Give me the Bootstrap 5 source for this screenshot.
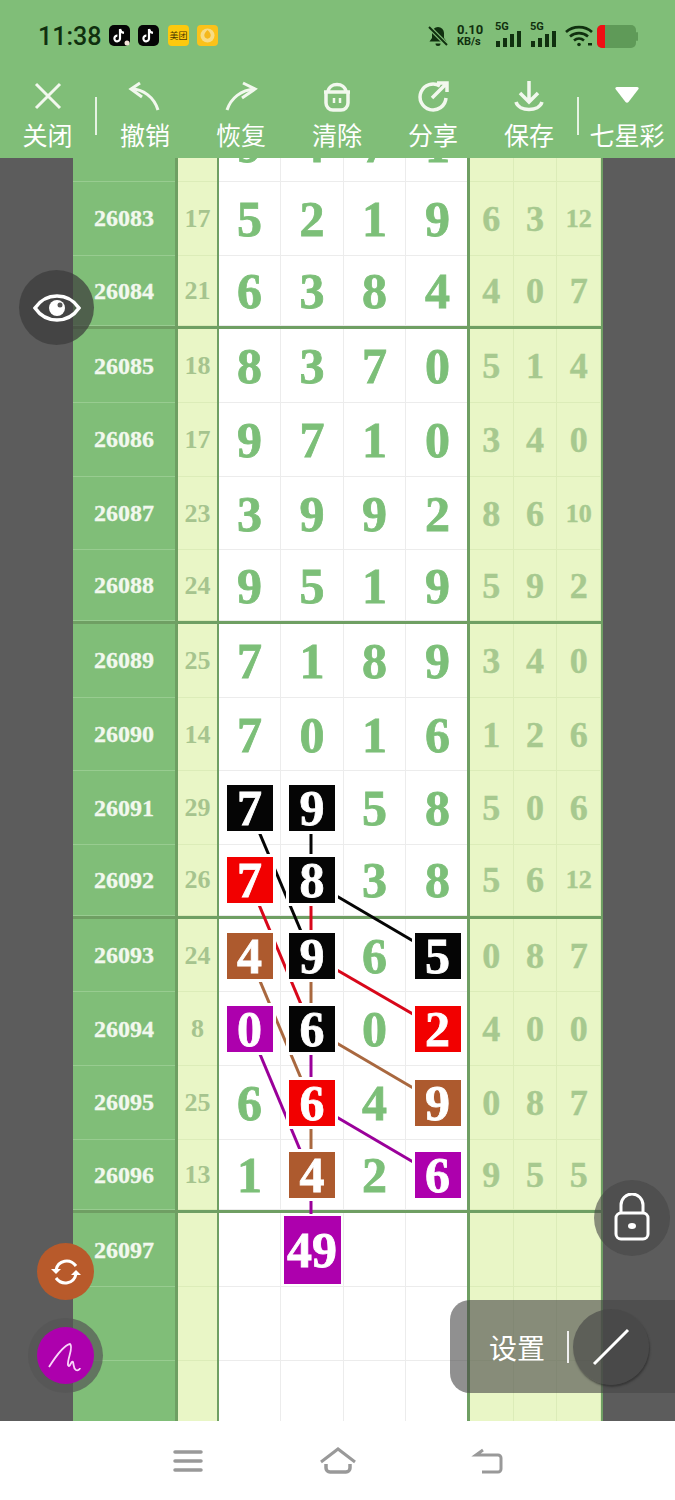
<!DOCTYPE html>
<html lang="zh">
<head>
<meta charset="UTF-8">
<meta name="viewport" content="width=device-width, initial-scale=1.0">
<title>七星彩</title>
<link href="https://cdn.jsdelivr.net/npm/bootstrap@5.3.0/dist/css/bootstrap.min.css" rel="stylesheet">
<style>
  body { margin: 0; background: #fff; font-family: "Noto Sans CJK SC", "Noto Sans", sans-serif; }
  .screen { width: 675px; height: 1500px; overflow: hidden; }
  .top-area { height: 158px; background: #80be78; color: #fff; }
  .status-line { height: 70px; padding: 2px 37px 0 38px; color: #10300f; }
  .clock { font: 500 25px Roboto, sans-serif; width: 71px; }
  .speed { font: 700 13px/12px Roboto, sans-serif; width: 30px; margin: 0 8px; }
  .speed span { font-size: 11px; display: block; }
  .sig-label { font: 700 11px/11px Roboto, sans-serif; position: absolute; left: 0; top: -4px; }
  .sig { width: 27px; height: 22px; }
  .tool-line { height: 88px; }
  .tool { width: 96px; height: 88px; padding-top: 8px; font-size: 25px; line-height: 28px; }
  .tool svg { display: block; height: 36px; margin-bottom: 6px; }
  .tool-sep { width: 2px; height: 38px; background: #e6f3e3; margin-top: 27px; }
  .board { height: 1263px; background: #5c5c5c; overflow: hidden; }
  .sheet { width: 530px; margin-left: 73px; }
  .line-row { height: 73.67px; }
  .line-row.first-row { margin-top: -49.5px; }
  .line-row.group-end { border-bottom: 3px solid #6f9f63; }
  .period { width: 105px; background: #80be78; color: #f2f8ee; border-right: 3px solid #6f9f63; font: 700 24px "Liberation Serif", serif; box-shadow: inset 0 -1px 0 #98cc90; -webkit-text-stroke: .3px currentColor; }
  .sum { width: 41px; background: #e9f6c6; color: #a6c48e; border-right: 2px solid #6f9f63; font: 700 26px "Liberation Serif", serif; box-shadow: inset 0 -1px 0 #dcecb8; }
  .ball { width: 62px; background: #fff; border-right: 1px solid #ececec; color: #7cbf78; font: 700 50px "Liberation Serif", serif; box-shadow: inset 0 -1px 0 #ececec; -webkit-text-stroke: .8px currentColor; }
  .ball:nth-of-type(4) { width: 63px; }
  .ball:nth-of-type(6) { width: 61px; border-right: 0; padding-left: 2px; }
  .tail-group { width: 134px; border-left: 3px solid #6f9f63; }
  .tail { width: 43.67px; background: #e9f6c6; border-right: 1px solid #dcecb8; color: #a7c98f; font: 700 36px "Liberation Serif", serif; box-shadow: inset 0 -1px 0 #dcecb8; -webkit-text-stroke: .4px currentColor; }
  .tail.two-digit { font-size: 26px; }
  .tail-end { width: 2px; background: #6f9f63; }
  .hit { width: 46px; height: 46px; color: #fff; outline: 3px solid #fff; position: relative; z-index: 3; line-height: 46px; }
  .hit-k { background: #050505; }
  .hit-r { background: #f20000; }
  .hit-b { background: #ad5a2e; }
  .hit-p { background: #ad00ad; }
  .hit-big { width: 57px; height: 68px; line-height: 68px; outline-width: 2px; }
  .link-lines { left: 73px; top: 158px; z-index: 2; }
  .float-btn { border-radius: 50%; z-index: 5; }
  .eye-btn { left: 19px; top: 270px; width: 75px; height: 75px; background: rgba(60,60,60,.72); }
  .swap-btn { left: 37px; top: 1243px; width: 57px; height: 57px; background: #b85a2b; }
  .pen-ring { left: 28px; top: 1318px; width: 75px; height: 75px; background: rgba(85,85,85,.7); }
  .pen-btn { width: 57px; height: 57px; background: #ad00ad; border-radius: 50%; }
  .lock-btn { left: 594px; top: 1180px; width: 76px; height: 76px; background: rgba(70,70,70,.6); }
  .setting-bar { left: 450px; top: 1300px; width: 225px; height: 93px; background: rgba(70,70,70,.6); border-radius: 20px 0 0 20px; color: #fff; font-size: 28px; padding-left: 39px; z-index: 4; }
  .setting-sep { width: 2px; height: 32px; background: #f0f0f0; margin-left: 22px; }
  .pen-line { width: 76px; height: 76px; border-radius: 50%; background: rgba(70,70,70,.65); box-shadow: 1px 2px 2px rgba(40,40,40,.6); margin-left: 4px; }
  .bottom-nav { height: 79px; background: #fff; }
</style>
</head>
<body>
<div class="screen position-relative d-flex flex-column">

  <div class="top-area">
    <div class="status-line d-flex align-items-center justify-content-between">
      <div class="d-flex align-items-center">
        <div class="clock">11:38</div>
        <svg width="110" height="22" viewBox="0 0 110 22">
          <rect x="0" y="0" width="21" height="21" rx="5" fill="#050505"/>
          <path d="M11 4v9.500a2.800 2.800 0 1 1-2.600-2.800M11 4c.3 2.300 1.700 3.600 4 3.900" fill="none" stroke="#fff" stroke-width="2.200"/>
          <circle cx="18" cy="18" r="2.500" fill="#f4e4d8"/>
          <rect x="29" y="0" width="21" height="21" rx="5" fill="#050505"/>
          <path d="M40 4v9.500a2.800 2.800 0 1 1-2.600-2.800M40 4c.3 2.300 1.700 3.600 4 3.900" fill="none" stroke="#fff" stroke-width="2.200"/>
          <rect x="59" y="0" width="21" height="21" rx="4" fill="#fdc90e"/>
          <text x="69.500" y="14" font-size="9" text-anchor="middle" fill="#4a3800">美团</text>
          <rect x="88" y="0" width="21" height="21" rx="4" fill="#fbc21a"/>
          <circle cx="98.500" cy="10.500" r="7" fill="#f7dc86"/>
          <path d="M98.500 5c3 3 4 5 2.500 7.500-1.500 1.500-3.500 1.500-5 0-1.500-2.500-.5-4.500 2.500-7.500z" fill="#f5b81c"/>
        </svg>
      </div>
      <div class="d-flex align-items-center">
        <svg width="22" height="22" viewBox="0 0 22 22">
          <path d="M11 2a6 6 0 0 0-6 6v5l-2.500 3.500h17L17 13V8a6 6 0 0 0-6-6z" fill="#10300f"/>
          <path d="M8.500 18.500h5a2.500 2.500 0 0 1-5 0z" fill="#10300f"/>
          <path d="M2 2l18 18" stroke="#80be78" stroke-width="4.500"/>
          <path d="M2 2l18 18" stroke="#10300f" stroke-width="2"/>
        </svg>
        <div class="speed">0.10<span>KB/s</span></div>
        <div class="sig position-relative me-1">
          <span class="sig-label">5G</span>
          <svg class="position-absolute bottom-0 start-0" width="27" height="16" viewBox="0 0 27 16" fill="#10300f"><rect x="1" y="10" width="4" height="6"/><rect x="8" y="7" width="4" height="9"/><rect x="15" y="3" width="4" height="13"/><rect x="22" y="0" width="4" height="16"/></svg>
        </div>
        <div class="sig position-relative ms-1">
          <span class="sig-label">5G</span>
          <svg class="position-absolute bottom-0 start-0" width="27" height="16" viewBox="0 0 27 16" fill="#10300f"><rect x="1" y="10" width="4" height="6"/><rect x="8" y="7" width="4" height="9"/><rect x="15" y="3" width="4" height="13"/><rect x="22" y="0" width="4" height="16"/></svg>
        </div>
        <svg class="ms-2" width="28" height="22" viewBox="0 0 28 22" fill="none" stroke="#10300f" stroke-width="2.600">
          <path d="M1 7c7-6.500 19-6.500 26 0"/><path d="M5 11.500c5-4.500 13-4.500 18 0"/><path d="M9 15.500c3-2.500 7-2.500 10 0"/>
          <circle cx="14" cy="19.500" r="1.800" fill="#10300f" stroke="none"/><rect x="23" y="18" width="4" height="2.500" fill="#10300f" stroke="none"/>
        </svg>
        <svg class="ms-1" width="41" height="23" viewBox="0 0 41 23">
          <rect x="0" y="0" width="39" height="23" rx="5" fill="#5f9a58"/>
          <path d="M5 0h3v23H5a5 5 0 0 1-5-5V5a5 5 0 0 1 5-5z" fill="#f00f14"/>
          <rect x="39" y="7" width="2" height="9" rx="1" fill="#5f9a58"/>
        </svg>
      </div>
    </div>
    <div class="tool-line d-flex">
      <div class="tool text-center" style="width:95px">
        <svg class="mx-auto" width="36" viewBox="0 0 36 36" fill="none" stroke="#f2f8ee" stroke-width="3"><path d="M6 6l24 24M30 6L6 30"/></svg>关闭
      </div>
      <div class="tool-sep"></div>
      <div class="tool text-center">
        <svg class="mx-auto" width="36" viewBox="0 0 36 36" fill="none" stroke="#f2f8ee" stroke-width="3"><path d="M13 5L4 11l11 8"/><path d="M4 11c12 0 23 8 27 21"/></svg>撤销
      </div>
      <div class="tool text-center">
        <svg class="mx-auto" width="36" viewBox="0 0 36 36" fill="none" stroke="#f2f8ee" stroke-width="3"><path d="M20 5l12 6-13 9"/><path d="M32 11C18 12 8 20 4 32"/></svg>恢复
      </div>
      <div class="tool text-center">
        <svg class="mx-auto" width="36" viewBox="0 0 36 36" fill="none" stroke="#f2f8ee" stroke-width="3.500"><path d="M7 14v11a7 7 0 0 0 7 7h8a7 7 0 0 0 7-7V14"/><path d="M5 14h26"/><path d="M9 14c1-10 17-10 18 0"/><path d="M15 20v5M21 20v5" stroke-width="2.500"/></svg>清除
      </div>
      <div class="tool text-center">
        <svg class="mx-auto" width="36" viewBox="0 0 36 36" fill="none" stroke="#f2f8ee" stroke-width="3.500"><path d="M25 8A13 13 0 1 0 31 20"/><path d="M17 20L31 6M22 5h10v9"/></svg>分享
      </div>
      <div class="tool text-center">
        <svg class="mx-auto" width="36" viewBox="0 0 36 36" fill="none" stroke="#f2f8ee" stroke-width="3.500"><path d="M18 3v21M9 15l9 9 9-9"/><path d="M5 24c3 10 23 10 26 0"/></svg>保存
      </div>
      <div class="tool-sep"></div>
      <div class="tool text-center" style="width:96px">
        <svg class="mx-auto" width="36" viewBox="0 0 36 36"><path d="M8 9h20c1.500 0 2 1 1.500 2L19.500 24c-.8 1-2.200 1-3 0L6.500 11C6 10 6.500 9 8 9z" fill="#fff"/></svg>七星彩
      </div>
    </div>
  </div>

  <div class="board">
    <div class="sheet" id="sheet"></div>
  </div>

  <div class="bottom-nav d-flex align-items-center">
    <svg style="margin-left:172px" width="32" height="26" viewBox="0 0 32 26" stroke="#999" stroke-width="3.500" stroke-linecap="round"><path d="M3 4h26M3 13h26M3 22h26"/></svg>
    <svg style="margin-left:116px" width="36" height="28" viewBox="0 0 36 28" fill="none" stroke="#999" stroke-width="3"><path d="M1 15L18 2l17 13"/><path d="M6 17v4a4 4 0 0 0 4 4h16a4 4 0 0 0 4-4v-4" stroke-width="3.500"/></svg>
    <svg style="margin-left:115px" width="36" height="28" viewBox="0 0 36 28" fill="none" stroke="#999" stroke-width="3"><path d="M12 3L5 8h22a3 3 0 0 1 3 3v11a3 3 0 0 1-3 3H11"/></svg>
  </div>

  <svg class="link-lines position-absolute" id="links" width="530" height="1263" viewBox="73 158 530 1263"></svg>

  <div class="float-btn eye-btn position-absolute d-flex align-items-center justify-content-center">
    <svg width="48" height="34" viewBox="0 0 48 34"><path d="M2 17C13 1 35 1 46 17 35 33 13 33 2 17z" fill="none" stroke="#fff" stroke-width="3.500"/><circle cx="24" cy="17" r="8" fill="#fff"/><circle cx="27" cy="14" r="2.500" fill="#555"/></svg>
  </div>
  <div class="float-btn lock-btn position-absolute d-flex align-items-center justify-content-center">
    <svg width="38" height="50" viewBox="0 0 38 50" fill="none" stroke="#fff" stroke-width="3"><path d="M8 20v-8a11 11 0 0 1 22 0v8"/><rect x="3" y="20" width="32" height="26" rx="5"/><ellipse cx="19" cy="33" rx="4" ry="3" fill="#fff" stroke="none"/></svg>
  </div>
  <div class="float-btn swap-btn position-absolute d-flex align-items-center justify-content-center">
    <svg width="32" height="28" viewBox="0 0 32 28" fill="none" stroke="#fff" stroke-width="3"><path d="M6 12C8 2 20 0 26 8"/><path d="M26 16C24 26 12 28 6 20"/><path d="M1 11l5 5 5-5z" fill="#fff" stroke="none"/><path d="M21 17l5-5 5 5z" fill="#fff" stroke="none"/></svg>
  </div>
  <div class="float-btn pen-ring position-absolute d-flex align-items-center justify-content-center">
    <div class="pen-btn d-flex align-items-center justify-content-center">
      <svg width="40" height="40" viewBox="0 0 40 40" fill="none" stroke="#f9d5f9" stroke-width="1.800"><path d="M3 31C10 20 18 9 24 8c4 3-3 15-2 21 2 4 3-5 5-3 1 3 0 6 3 8 2 1 4-1 4-2"/></svg>
    </div>
  </div>
  <div class="setting-bar position-absolute d-flex align-items-center">
    设置
    <div class="setting-sep"></div>
    <div class="pen-line d-flex align-items-center justify-content-center">
      <svg width="38" height="38" viewBox="0 0 38 38" stroke="#fff" stroke-width="3"><path d="M2 36L36 2"/></svg>
    </div>
  </div>
</div>

<script src="https://cdn.jsdelivr.net/npm/bootstrap@5.3.0/dist/js/bootstrap.bundle.min.js"></script>
<script>
  // period, sum, four balls (k/r/b/p suffix = highlighted colour), three tails
  const rows = [
    ['', '', '9', '4', '7', '1', '', '', ''],
    ['26083', '17', '5', '2', '1', '9', '6', '3', '12'],
    ['26084', '21', '6', '3', '8', '4', '4', '0', '7'],
    ['26085', '18', '8', '3', '7', '0', '5', '1', '4'],
    ['26086', '17', '9', '7', '1', '0', '3', '4', '0'],
    ['26087', '23', '3', '9', '9', '2', '8', '6', '10'],
    ['26088', '24', '9', '5', '1', '9', '5', '9', '2'],
    ['26089', '25', '7', '1', '8', '9', '3', '4', '0'],
    ['26090', '14', '7', '0', '1', '6', '1', '2', '6'],
    ['26091', '29', '7k', '9k', '5', '8', '5', '0', '6'],
    ['26092', '26', '7r', '8k', '3', '8', '5', '6', '12'],
    ['26093', '24', '4b', '9k', '6', '5k', '0', '8', '7'],
    ['26094', '8', '0p', '6k', '0', '2r', '4', '0', '0'],
    ['26095', '25', '6', '6r', '4', '9b', '0', '8', '7'],
    ['26096', '13', '1', '4b', '2', '6p', '9', '5', '5'],
    ['26097', '', '', '49P', '', '', '', '', ''],
    ['', '', '', '', '', '', '', '', ''],
    ['', '', '', '', '', '', '', '', '']
  ];
  const center = 'd-flex align-items-center justify-content-center';

  function ballHtml(v) {
    if (!v) return `<div class="ball ${center}"></div>`;
    const m = v.match(/^(\d+)([krbpP]?)$/);
    if (!m[2]) return `<div class="ball ${center}">${m[1]}</div>`;
    const big = m[2] === 'P';
    const cls = 'hit hit-' + m[2].toLowerCase() + (big ? ' hit-big' : '');
    return `<div class="ball ${center}"><div class="${cls} text-center">${m[1]}</div></div>`;
  }

  document.getElementById('sheet').innerHTML = rows.map((r, i) => {
    // every fourth data row closes a group with the thick line
    const end = [2, 6, 10, 14].includes(i) ? ' group-end' : '';
    const first = i === 0 ? ' first-row' : '';
    const tails = r.slice(6).map(t => `<div class="tail ${center}${t.length > 1 ? ' two-digit' : ''}">${t}</div>`).join('');
    return `<div class="line-row d-flex${end}${first}">
      <div class="period ${center}">${r[0]}</div>
      <div class="sum ${center}">${r[1]}</div>
      ${r.slice(2, 6).map(ballHtml).join('')}
      <div class="d-flex tail-group">${tails}</div>
      <div class="tail-end"></div>
    </div>`;
  }).join('');

  const links = [
    ['#050505', 249, 808, 311, 955], ['#050505', 311, 808, 311, 881], ['#050505', 311, 881, 437, 955],
    ['#d8071a', 249, 881, 311, 1028], ['#d8071a', 311, 881, 311, 955], ['#d8071a', 311, 955, 437, 1028],
    ['#a9683f', 249, 955, 311, 1102], ['#a9683f', 311, 955, 311, 1028], ['#a9683f', 311, 1028, 437, 1102],
    ['#9a009a', 249, 1028, 311, 1176], ['#9a009a', 311, 1028, 311, 1102], ['#9a009a', 311, 1102, 437, 1176],
    ['#a9683f', 311, 1102, 311, 1176], ['#9a009a', 311, 1176, 311, 1250]
  ];
  document.getElementById('links').innerHTML = links.map(l =>
    `<line x1="${l[1]}" y1="${l[2]}" x2="${l[3]}" y2="${l[4]}" stroke="${l[0]}" stroke-width="3"/>`).join('');
</script>
</body>
</html>
